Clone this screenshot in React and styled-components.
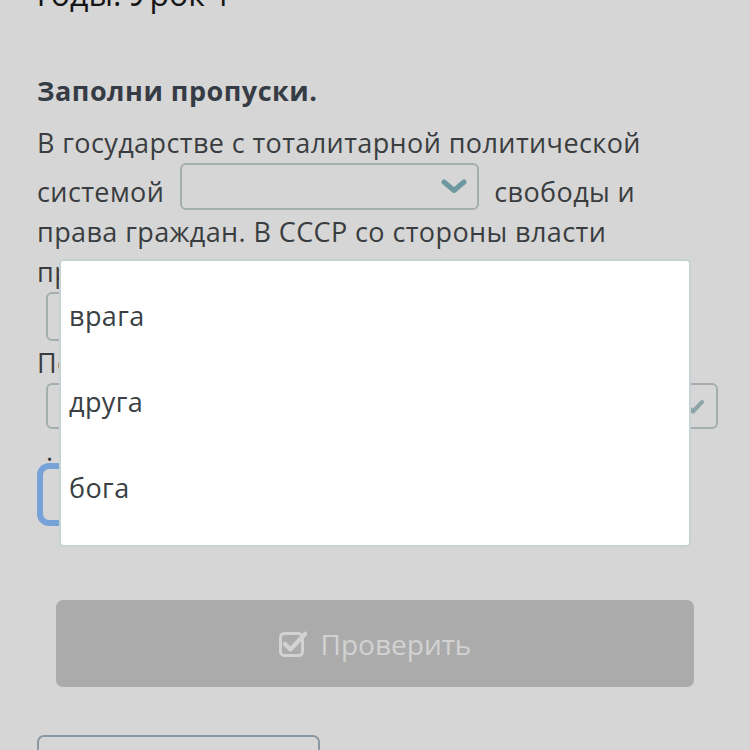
import React from 'react'
import styled, { createGlobalStyle } from 'styled-components'

const Global = createGlobalStyle`
  html, body {
    margin: 0;
    padding: 0;
    background: #d6d6d6;
    overflow: hidden;
  }
  body {
    font-family: "Open Sans", "Noto Sans", sans-serif;
  }
`

const Page = styled.div`
  position: relative;
  width: 750px;
  height: 750px;
  padding: 0 38px 0 37px;
  box-sizing: border-box;
  overflow: hidden;
`

const LessonTitle = styled.div`
  margin-top: -26px;
  font-size: 32px;
  line-height: 40px;
  color: #151515;
`

const TaskTitle = styled.div`
  margin-top: 59px;
  font-size: 27px;
  line-height: 36px;
  font-weight: 700;
  letter-spacing: 0.5px;
  color: #363c45;
`

const Text = styled.div`
  margin-top: 14px;
  font-size: 27px;
  line-height: 40px;
  letter-spacing: 0.4px;
  color: #3a3d40;
`

const Select = styled.span`
  display: inline-flex;
  align-items: center;
  justify-content: flex-end;
  box-sizing: border-box;
  vertical-align: text-bottom;
  width: ${p => p.w}px;
  height: ${p => p.h}px;
  margin: 0 ${p => p.mr || 0}px 0 ${p => p.ml || 0}px;
  padding-right: ${p => p.pr || 10}px;
  border: 2px solid #a4aeae;
  border-radius: 6px;
  color: ${p => p.iconColor || '#6d98a0'};
`

const Dot = styled.span`
  margin-left: 9px;
`

const FocusBox = styled.div`
  margin-top: -8px;
  width: 300px;
  height: 63px;
  box-sizing: border-box;
  border: 6px solid #77a2d8;
  border-radius: 12px;
`

const CheckButton = styled.div`
  display: flex;
  align-items: center;
  justify-content: center;
  gap: 12px;
  margin: 74px 18px 0 19px;
  height: 87px;
  border-radius: 7px;
  background: #ababab;
  color: #d2d2d2;
  font-size: 28px;
`

const NextBox = styled.div`
  margin-top: 48px;
  width: 283px;
  height: 70px;
  box-sizing: border-box;
  border: 2px solid #8b97a1;
  border-radius: 7px;
`

const Dropdown = styled.ul`
  position: absolute;
  left: 59px;
  top: 259px;
  width: 632px;
  height: 288px;
  box-sizing: border-box;
  margin: 0;
  padding: 12px 0;
  list-style: none;
  background: #fff;
  border: 2px solid #c6d3d4;
  border-radius: 5px;
`

const Option = styled.li`
  height: 86px;
  line-height: 86px;
  padding-left: 8px;
  font-size: 27px;
  letter-spacing: 0.4px;
  color: #3a3f44;
`

const Chevron = () => (
  <svg width="26" height="15" viewBox="0 0 26 15">
    <polyline points="3,3 13,11.5 23,3" fill="none" stroke="currentColor" strokeWidth="5" strokeLinecap="round" strokeLinejoin="round" />
  </svg>
)

const Tick = () => (
  <svg width="17" height="15" viewBox="0 0 17 15">
    <polyline points="2,9 6,12.5 15,3" fill="none" stroke="currentColor" strokeWidth="4" strokeLinecap="round" strokeLinejoin="round" />
  </svg>
)

const CheckSquare = () => (
  <svg width="30" height="28" viewBox="0 0 30 28">
    <rect x="1.5" y="3.5" width="22" height="22" rx="4" fill="none" stroke="currentColor" strokeWidth="3" />
    <polyline points="6,14 11.5,19.5 26,4" fill="none" stroke="currentColor" strokeWidth="4.5" strokeLinecap="round" strokeLinejoin="round" />
  </svg>
)

export default function App() {
  return (
    <>
      <Global />
      <Page>
        <LessonTitle>годы. Урок 1</LessonTitle>
        <TaskTitle>Заполни пропуски.</TaskTitle>
        <Text>
          В государстве с тоталитарной политической системой{' '}
          <Select w={299} h={47} ml={8} mr={8}><Chevron /></Select>{' '}
          свободы и права граждан. В СССР со стороны власти пропагандировался образ{' '}
          <Select w={630} h={49} ml={9}><Chevron /></Select>{' '}
          Поиск вредителей шёл повсюду.{' '}
          <Select w={672} h={46} ml={9} pr={12} iconColor="#8fa3aa"><Tick /></Select>
          <Dot>.</Dot>
        </Text>
        <FocusBox />
        <CheckButton>
          <CheckSquare />
          Проверить
        </CheckButton>
        <NextBox />
        <Dropdown>
          <Option>врага</Option>
          <Option>друга</Option>
          <Option>бога</Option>
        </Dropdown>
      </Page>
    </>
  )
}
